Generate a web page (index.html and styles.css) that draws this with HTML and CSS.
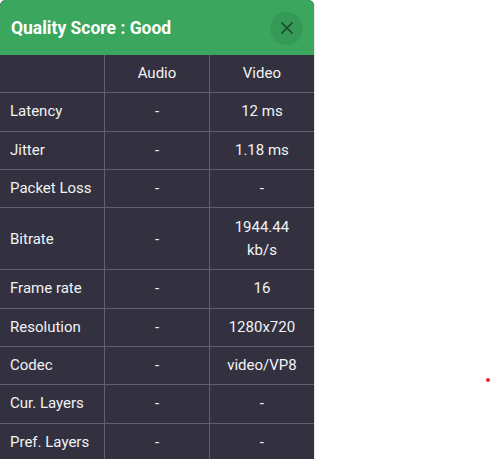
FILE: index.html
```html
<!DOCTYPE html>
<html>
<head>
<meta charset="utf-8">
<link rel="stylesheet" href="styles.css">
</head>
<body>
<div class="panel">
  <div class="panel-header">
    <span class="title">Quality Score : Good</span>
    <button class="close" aria-label="Close">
      <svg width="12" height="12" viewBox="0 0 12 12"><path d="M1 1L11 11M11 1L1 11" stroke="#1d4a2b" stroke-width="1.6" stroke-linecap="square"/></svg>
    </button>
  </div>
  <table class="stats">
    <tr><th></th><th>Audio</th><th>Video</th></tr>
    <tr><td>Latency</td><td>-</td><td>12 ms</td></tr>
    <tr><td>Jitter</td><td>-</td><td>1.18 ms</td></tr>
    <tr><td>Packet Loss</td><td>-</td><td>-</td></tr>
    <tr class="tall"><td>Bitrate</td><td>-</td><td>1944.44 kb/s</td></tr>
    <tr><td>Frame rate</td><td>-</td><td>16</td></tr>
    <tr><td>Resolution</td><td>-</td><td>1280x720</td></tr>
    <tr><td>Codec</td><td>-</td><td>video/VP8</td></tr>
    <tr><td>Cur. Layers</td><td>-</td><td>-</td></tr>
    <tr><td>Pref. Layers</td><td>-</td><td>-</td></tr>
  </table>
</div>
<div class="dot"></div>
</body>
</html>
```
FILE: styles.css
```css
html, body {
  margin: 0;
  padding: 0;
  background: #ffffff;
}
body {
  font-family: Roboto, "Liberation Sans", sans-serif;
  height: 459px;
  overflow: hidden;
}
.panel {
  width: 314px;
  background: #33313f;
  border-radius: 6px 6px 0 0;
  overflow: hidden;
  box-shadow: 0 0 2px rgba(0,0,0,0.35);
}
.panel-header {
  height: 55px;
  background: #3ba65d;
  display: flex;
  align-items: center;
  justify-content: space-between;
  padding: 0 11px 0 11px;
  box-sizing: border-box;
}
.title {
  color: #ffffff;
  font-weight: 700;
  font-size: 17.5px;
}
.close {
  width: 33px;
  height: 33px;
  border-radius: 50%;
  border: none;
  background: #369a57;
  display: flex;
  align-items: center;
  justify-content: center;
  padding: 0;
  margin-top: 1px;
  cursor: pointer;
}
.stats {
  width: 314px;
  table-layout: fixed;
  border-collapse: collapse;
  color: #f2f2f5;
  font-size: 15px;
}
.stats th, .stats td {
  border: 1px solid #615f6d;
  padding: 7.17px 10px;
  line-height: 23px;
  text-align: center;
  font-weight: 400;
}
.stats tr:first-child th { border-top: none; }
.stats th:first-child, .stats td:first-child {
  border-left: none;
  text-align: left;
}
.stats th:last-child, .stats td:last-child { border-right: none; }
.stats .tall td { line-height: 22.5px; padding-top: 8px; padding-bottom: 8px; }
.dot {
  position: absolute;
  left: 486px;
  top: 378px;
  width: 4px;
  height: 4px;
  border-radius: 50%;
  background: #e8242a;
}
```
